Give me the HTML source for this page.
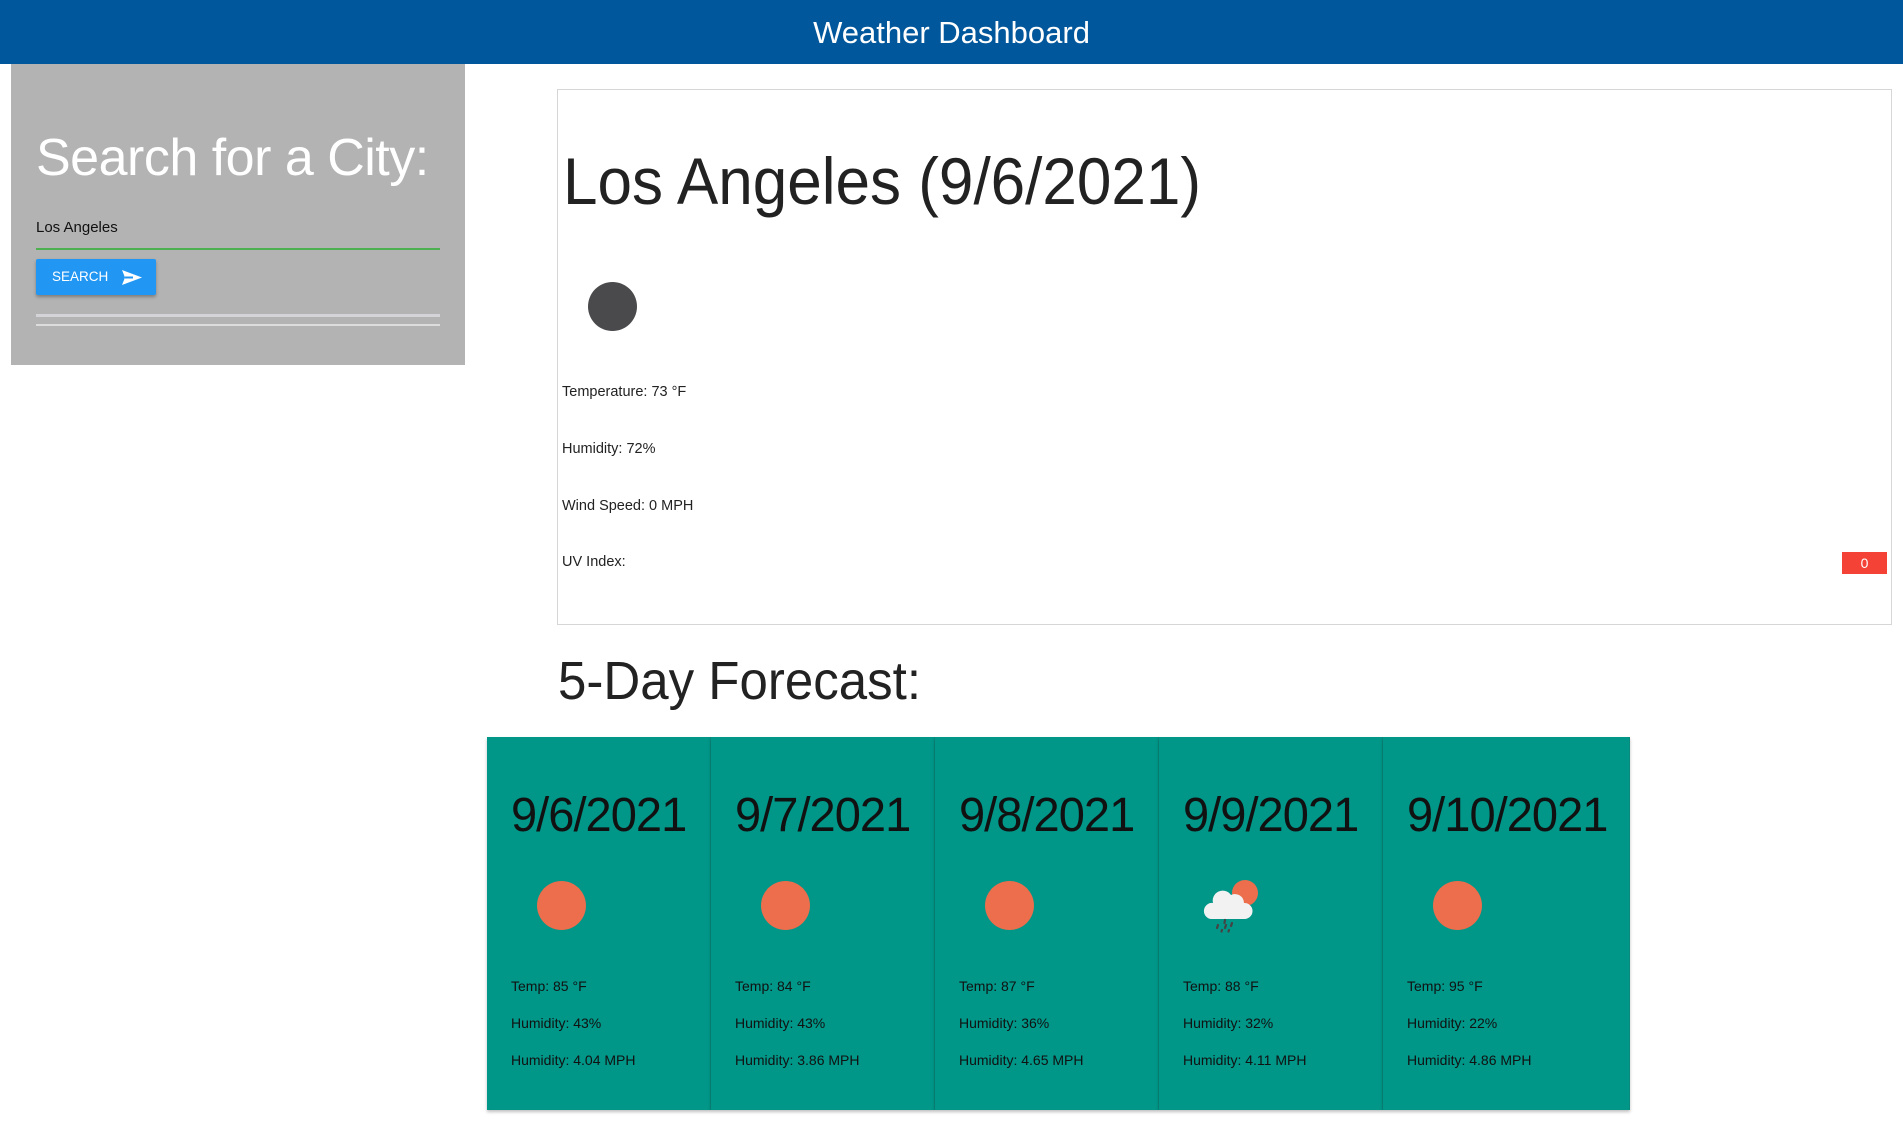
<!DOCTYPE html>
<html><head><meta charset="utf-8">
<style>
*{margin:0;padding:0;box-sizing:border-box}
html,body{width:1903px;height:1144px;overflow:hidden;background:#fff;font-family:"Liberation Sans",sans-serif;color:#222}
.abs{position:absolute;white-space:nowrap}
.hdr{position:absolute;left:0;top:0;width:1903px;height:64px;background:#01579b;color:#fff;text-align:center;font-size:31px;line-height:66px}
.side{position:absolute;left:11px;top:64px;width:454px;height:301px;background:#b3b3b3}
.card{position:absolute;left:557px;top:89px;width:1335px;height:536px;border:1px solid #d6d6d6}
.small{font-size:14.5px;color:#222}
.fc{position:absolute;top:737px;height:373px;background:#009688;box-shadow:0 2px 3px rgba(0,0,0,.25);border-right:1px solid #0a8a7c}
.fc .d{position:absolute;left:24px;top:51px;font-size:48px;color:#111;letter-spacing:-1px;transform:scaleX(.98);transform-origin:left}
.fc .sun{position:absolute;left:50px;top:144px;width:49px;height:49px;border-radius:50%;background:#ec6e4c}
.fc .t{position:absolute;left:24px;font-size:14px;color:#111}
</style></head><body>
<div class="hdr">Weather Dashboard</div>
<div class="side">
  <div class="abs" style="left:25px;top:64px;font-size:52px;color:#fff;letter-spacing:-0.5px">Search for a City:</div>
  <div class="abs" style="left:25px;top:155px;font-size:15px;color:#111">Los Angeles</div>
  <div class="abs" style="left:25px;top:184px;width:404px;height:2px;background:#4caf50"></div>
  <div class="abs" style="left:25px;top:195px;width:120px;height:36px;background:#2196f3;box-shadow:0 2px 3px rgba(0,0,0,.3);border-radius:2px;color:#fff;font-size:13.5px;line-height:36px;padding-left:16px">SEARCH
    <svg style="position:absolute;left:86px;top:11px" width="20" height="15" viewBox="0 0 20 15"><path d="M0 0 L20 7.5 L0 15 L3 7.5 Z" fill="#fff"/><path d="M3 7.5 H11" stroke="#2196f3" stroke-width="2"/></svg>
  </div>
  <div class="abs" style="left:25px;top:250px;width:404px;height:3px;background:#d4d4d8"></div>
  <div class="abs" style="left:25px;top:260px;width:404px;height:2px;background:#dcdcdc"></div>
</div>
<div class="card">
  <div class="abs" style="left:5px;top:53px;font-size:66px;color:#222;transform:scaleX(.94);transform-origin:left">Los Angeles (9/6/2021)</div>
  <div class="abs" style="left:30px;top:192px;width:49px;height:49px;border-radius:50%;background:#4a4a4c"></div>
  <div class="abs small" style="left:4px;top:294px">Temperature: 73 °F</div>
  <div class="abs small" style="left:4px;top:351px">Humidity: 72%</div>
  <div class="abs small" style="left:4px;top:408px">Wind Speed: 0 MPH</div>
  <div class="abs small" style="left:4px;top:464px">UV Index:</div>
  <div class="abs" style="left:1284px;top:462px;width:45px;height:22px;background:#f44336;color:#fff;font-size:14px;text-align:center;line-height:22px">0</div>
</div>
<div class="abs" style="left:558px;top:650px;font-size:54px;color:#222;transform:scaleX(.945);transform-origin:left">5-Day Forecast:</div>

<div class="fc" style="left:487px;width:224px"><div class="d">9/6/2021</div><div class="sun"></div>
<div class="t" style="top:241px">Temp: 85 °F</div><div class="t" style="top:278px">Humidity: 43%</div><div class="t" style="top:315px">Humidity: 4.04 MPH</div></div>
<div class="fc" style="left:711px;width:224px"><div class="d">9/7/2021</div><div class="sun"></div>
<div class="t" style="top:241px">Temp: 84 °F</div><div class="t" style="top:278px">Humidity: 43%</div><div class="t" style="top:315px">Humidity: 3.86 MPH</div></div>
<div class="fc" style="left:935px;width:224px"><div class="d">9/8/2021</div><div class="sun"></div>
<div class="t" style="top:241px">Temp: 87 °F</div><div class="t" style="top:278px">Humidity: 36%</div><div class="t" style="top:315px">Humidity: 4.65 MPH</div></div>
<div class="fc" style="left:1159px;width:224px"><div class="d">9/9/2021</div>
<svg style="position:absolute;left:44px;top:136px" width="60" height="60" viewBox="0 0 60 60">
<circle cx="42" cy="20" r="13" fill="#ec6e4c"/>
<path d="M8 46 a8 8 0 0 1 2-16 a10 10 0 0 1 18-8 a9 9 0 0 1 13 8 a8 8 0 0 1 1 16 Z" fill="#f2f2f2"/>
<g stroke="#444" stroke-width="2.2" stroke-linecap="round"><path d="M22 47 l-0.5 3"/><path d="M15 52 l-1 3"/><path d="M23 52 l-1 3"/><path d="M29 50 l-1 3"/><path d="M19 57 l-.5 1.5"/><path d="M26 57 l-.5 1.5"/></g>
</svg>
<div class="t" style="top:241px">Temp: 88 °F</div><div class="t" style="top:278px">Humidity: 32%</div><div class="t" style="top:315px">Humidity: 4.11 MPH</div></div>
<div class="fc" style="left:1383px;width:247px"><div class="d">9/10/2021</div><div class="sun"></div>
<div class="t" style="top:241px">Temp: 95 °F</div><div class="t" style="top:278px">Humidity: 22%</div><div class="t" style="top:315px">Humidity: 4.86 MPH</div></div>
</body></html>
